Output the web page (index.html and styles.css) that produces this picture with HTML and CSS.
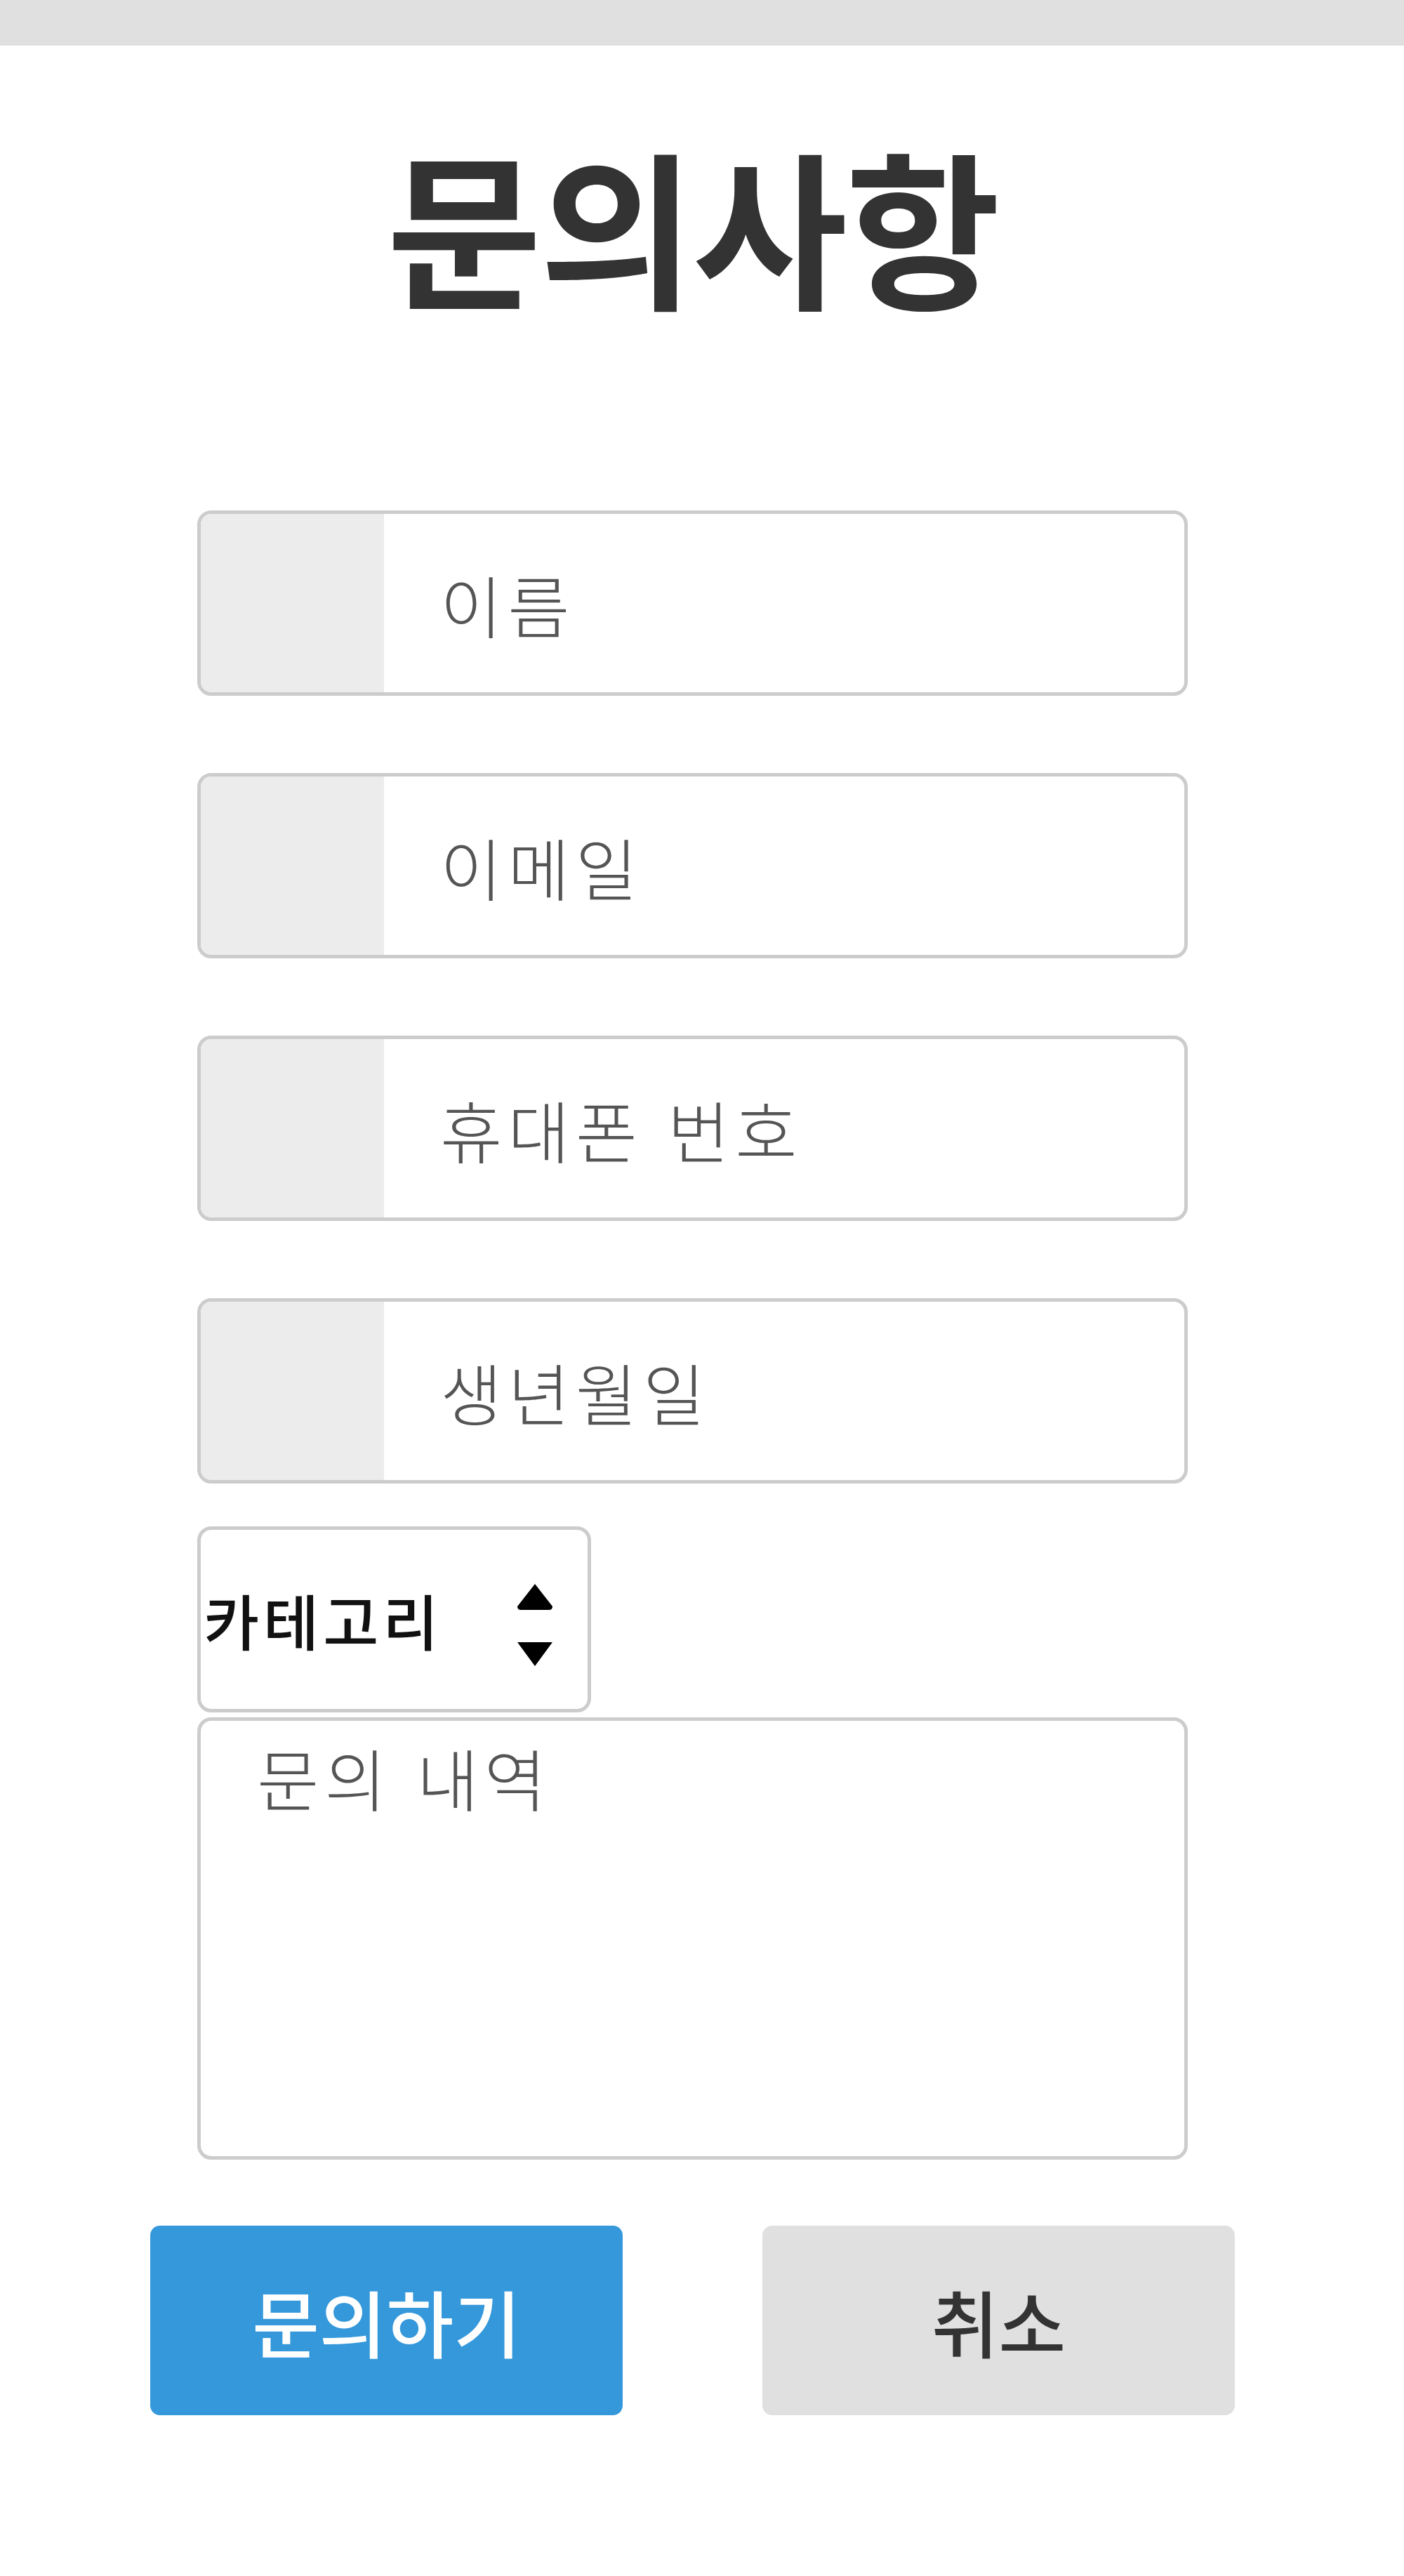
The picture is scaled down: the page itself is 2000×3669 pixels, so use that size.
FILE: index.html
```html
<!DOCTYPE html>
<html lang="ko">
<head>
<meta charset="utf-8">
<title>문의사항</title>
<link rel="stylesheet" href="styles.css">
</head>
<body>
<div class="topbar"></div>
<main class="page">
  <h1 class="title">문의사항</h1>
  <form class="form">
    <div class="field-group">
      <span class="addon"></span>
      <input class="field-input" type="text" placeholder="이름">
    </div>
    <div class="field-group">
      <span class="addon"></span>
      <input class="field-input" type="email" placeholder="이메일">
    </div>
    <div class="field-group">
      <span class="addon"></span>
      <input class="field-input" type="tel" placeholder="휴대폰 번호">
    </div>
    <div class="field-group">
      <span class="addon"></span>
      <input class="field-input" type="text" placeholder="생년월일">
    </div>
    <div class="select-wrap">
      <select class="category">
        <option>카테고리</option>
      </select>
      <svg class="select-arrows" viewBox="0 0 50 118" aria-hidden="true">
        <path d="M25 0 L50 32 Q50 37 45 37 L5 37 Q0 37 0 32 Z" fill="#000"/>
        <path d="M0 83 L50 83 L25 117 Z" fill="#000"/>
      </svg>
    </div>
    <textarea class="message" placeholder="문의 내역"></textarea>
  </form>
  <div class="actions">
    <button class="btn btn-primary" type="button">문의하기</button>
    <button class="btn btn-cancel" type="button">취소</button>
  </div>
</main>
</body>
</html>
```

FILE: styles.css
```css
html, body {
  margin: 0;
  padding: 0;
  background: #ffffff;
}

body {
  width: 2000px;
  min-height: 3669px;
  font-family: "Noto Sans CJK KR", "Noto Sans", sans-serif;
  color: #333333;
}

.topbar {
  height: 65px;
  background: #e0e0e0;
}

.page {
  width: 1973px;
  display: flex;
  flex-direction: column;
  align-items: center;
}

.title {
  margin: 133px 0 0;
  font-size: 240px;
  line-height: 240px;
  font-weight: 700;
  color: #333333;
  letter-spacing: -3px;
}

.form {
  width: 1411px;
  margin-top: 289px;
  display: flex;
  flex-direction: column;
  align-items: flex-start;
}

.field-group {
  box-sizing: border-box;
  width: 1411px;
  height: 264px;
  border: 5px solid #cccccc;
  border-radius: 20px;
  display: flex;
  overflow: hidden;
  margin-bottom: 110px;
  background: #ffffff;
}

.field-group:nth-child(4) {
  margin-bottom: 61px;
}

.addon {
  width: 261px;
  flex: none;
  background: #ececec;
}

.field-input {
  flex: 1;
  min-width: 0;
  border: 0;
  outline: none;
  background: transparent;
  padding: 0 0 0 80px;
  font-family: inherit;
  font-size: 96px;
  font-weight: 300;
  letter-spacing: 8px;
  color: #555555;
}

.field-input::placeholder,
.message::placeholder {
  color: #555555;
  opacity: 1;
}

.select-wrap {
  position: relative;
  width: 561px;
  height: 265px;
}

.category {
  appearance: none;
  -webkit-appearance: none;
  box-sizing: border-box;
  width: 100%;
  height: 100%;
  border: 5px solid #cccccc;
  border-radius: 20px;
  background: #ffffff;
  padding: 0 0 0 4px;
  font-family: inherit;
  font-size: 86px;
  font-weight: 500;
  letter-spacing: 6px;
  color: #111111;
  outline: none;
}

.select-arrows {
  position: absolute;
  left: 456px;
  top: 82px;
  width: 50px;
  height: 118px;
  pointer-events: none;
}

.message {
  box-sizing: border-box;
  width: 1411px;
  height: 630px;
  margin-top: 7px;
  border: 5px solid #cccccc;
  border-radius: 20px;
  padding: 22px 80px;
  resize: none;
  font-family: inherit;
  font-size: 96px;
  font-weight: 300;
  letter-spacing: 8px;
  line-height: 1.2;
  color: #555555;
  outline: none;
}

.actions {
  margin-top: 94px;
  display: flex;
  gap: 199px;
}

.btn {
  width: 673px;
  height: 270px;
  border: 0;
  border-radius: 14px;
  font-family: inherit;
  font-size: 104px;
  font-weight: 500;
  cursor: pointer;
}

.btn-primary {
  background: #3498db;
  color: #ffffff;
}

.btn-cancel {
  background: #e0e0e0;
  color: #333333;
}
```
